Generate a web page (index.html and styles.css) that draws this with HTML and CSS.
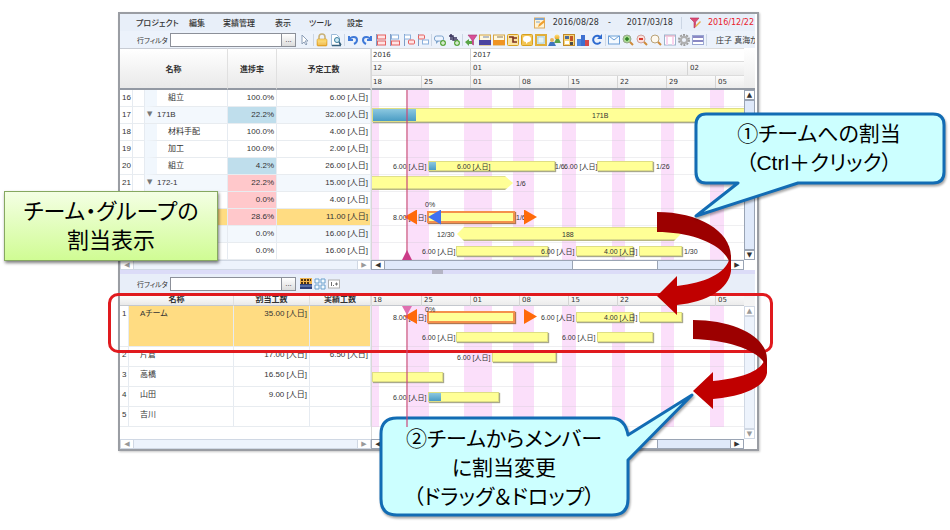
FILE: index.html
```html
<!DOCTYPE html>
<html lang="ja">
<head>
    <meta charset="UTF-8">
    <meta name="viewport" content="width=device-width, initial-scale=1.0">
    <title>チーム・グループの割当表示</title>
    <link rel="stylesheet" href="styles.css">
</head>
<body>
    <svg class="defs" aria-hidden="true">
        <defs>
            <linearGradient id="gold" x2="0" y2="1"><stop stop-color="#ffe27a"/><stop offset="1" stop-color="#e8a020"/></linearGradient>
            <symbol id="i-cursor" viewBox="0 0 14 14"><path d="M4 2v9l2-2 2 3 1-1-2-3h3z" fill="#fff" stroke="#8ea0b8"/></symbol>
            <symbol id="i-lock" viewBox="0 0 14 14"><path d="M4 7V4a3 3 0 0 1 6 0v3" fill="none" stroke="#c9b27a" stroke-width="1.6"/><rect x="2" y="6" width="10" height="7" rx="1" fill="url(#gold)" stroke="#d79a2c" stroke-width=".6"/><path d="M3 9h8M3 11h8" stroke="#fff2b8" stroke-width=".6"/></symbol>
            <symbol id="i-preview" viewBox="0 0 14 14"><path d="M2.500 1.500h5l3 3v8h-8z" fill="#fff" stroke="#9dbbd9"/><circle cx="8" cy="7" r="2.500" fill="#cfe9f5" stroke="#3b7f9d"/><path d="M10 9l2 3M3 12.500h9" stroke="#37607c" stroke-width="1.500"/></symbol>
            <symbol id="i-undo" viewBox="0 0 14 14"><path d="M3 3v4h4M3 7c2-4 8-4 8 0 0 2-1 3-3 4" fill="none" stroke="#3f79d8" stroke-width="2"/></symbol>
            <symbol id="i-redo" viewBox="0 0 14 14"><path d="M11 3v4H7M11 7c-2-4-8-4-8 0 0 2 1 3 3 4" fill="none" stroke="#3f79d8" stroke-width="2"/></symbol>
            <symbol id="i-row1" viewBox="0 0 14 14"><path d="M2.500 1v12" stroke="#7f9cc4"/><rect x="3.500" y="2" width="8" height="4" fill="#ffe4e4" stroke="#e46060"/><rect x="3.500" y="8" width="8" height="4" fill="#ffe4e4" stroke="#e46060"/></symbol>
            <symbol id="i-row2" viewBox="0 0 14 14"><path d="M2.500 1v12" stroke="#7f9cc4"/><rect x="3.500" y="2" width="7" height="4" fill="#fff" stroke="#8cb0dc"/><rect x="3.500" y="8" width="8" height="4" fill="#ffe4e4" stroke="#e46060"/></symbol>
            <symbol id="i-row3" viewBox="0 0 14 14"><path d="M2.500 1v12" stroke="#7f9cc4"/><rect x="2.500" y="2" width="6" height="4" fill="#fff" stroke="#8cb0dc"/><rect x="6.500" y="7" width="6" height="4" rx="1" fill="#ffe4e4" stroke="#e46060"/></symbol>
            <symbol id="i-row4" viewBox="0 0 14 14"><path d="M2.500 1v12" stroke="#7f9cc4"/><rect x="2.500" y="2" width="6" height="4" rx="1" fill="#ffe4e4" stroke="#e46060"/><rect x="6.500" y="7" width="6" height="4" fill="#fff" stroke="#8cb0dc"/></symbol>
            <symbol id="i-bubble" viewBox="0 0 14 14"><rect x="1.500" y="3" width="9" height="5" rx="2" fill="#eef5ff" stroke="#7da3cc"/><path d="M3 8v3l3-3" fill="#7da3cc"/><circle cx="10" cy="10" r="3" fill="#5ba83d"/><path d="M8 10h4M10 8v4" stroke="#fff"/></symbol>
            <symbol id="i-link" viewBox="0 0 14 14"><path d="M2 3h4v4h5M4 1v6M6 5h4" fill="none" stroke="#38325c" stroke-width="1.500"/><circle cx="10" cy="10" r="3" fill="#5ba83d"/><path d="M8 10h4M10 8v4" stroke="#fff"/></symbol>
            <symbol id="i-funnel" viewBox="0 0 14 14"><path d="M4 2h9L9.500 7v5L8 11V7z" fill="#d94f96" stroke="#a43672" stroke-width=".6"/><path d="M1 9l4-3v2h3v3H5v2z" fill="#5aa446"/></symbol>
            <symbol id="i-purple" viewBox="0 0 14 14"><rect x="1.500" y="2" width="11" height="10" fill="#fff8df" stroke="#d6a544"/><rect x="1" y="7" width="12" height="5" fill="#4b44a0"/><path d="M5 4h6" stroke="#6e83b0"/></symbol>
            <symbol id="i-orange" viewBox="0 0 14 14"><rect x="1.500" y="2" width="11" height="10" fill="#fff8df" stroke="#d6a544"/><rect x="1" y="7" width="12" height="5" fill="#ef9422"/><path d="M5 4h6" stroke="#8f7a5a"/></symbol>
            <symbol id="i-tree" viewBox="0 0 14 14"><rect x="1.500" y="1.500" width="11" height="11" rx="1" fill="#fbe3a1" stroke="#d6a020"/><path d="M3 4h4v5h4M7 5h4" fill="none" stroke="#7b3020" stroke-width="1.600"/></symbol>
            <symbol id="i-note" viewBox="0 0 14 14"><rect x="1.500" y="1.500" width="11" height="11" rx="1" fill="#f3c554" stroke="#d6a020"/><rect x="3" y="3" width="8" height="6" rx="3" fill="#fff"/><path d="M6 8v3l3-3" fill="#fff"/></symbol>
            <symbol id="i-frame" viewBox="0 0 14 14"><rect x="2" y="2" width="10" height="10" fill="#cfe6ef" stroke="#e0ae3a" stroke-width="2"/><rect x="4" y="4" width="6" height="6" fill="#e4f3f7" stroke="#9cc4cc" stroke-width=".6"/></symbol>
            <symbol id="i-people" viewBox="0 0 14 14"><circle cx="9" cy="4" r="2.500" fill="url(#gold)"/><path d="M6 10l2-4h3l2 4z" fill="#5aa04a"/><circle cx="4" cy="7" r="2" fill="#e9b25c"/><path d="M0 13l2-4h4l2 4z" fill="#3f74c0"/></symbol>
            <symbol id="i-board" viewBox="0 0 14 14"><rect x="1.500" y="1.500" width="11" height="11" fill="#f7d57a" stroke="#c08a2a"/><rect x="3" y="3" width="4" height="3" fill="#4a6a9c"/><rect x="8" y="3" width="3" height="5" fill="#c35428"/><rect x="3" y="8" width="4" height="3" fill="#fff"/><rect x="8" y="9" width="3" height="3" fill="#4a4a4a"/></symbol>
            <symbol id="i-chart" viewBox="0 0 14 14"><rect x="1" y="6" width="4" height="7" fill="#4f86dc"/><rect x="5" y="2" width="4" height="11" fill="#3d6fd0"/><rect x="9" y="7" width="4" height="6" fill="#d64a4a"/></symbol>
            <symbol id="i-refresh" viewBox="0 0 14 14"><path d="M10 4a4 4 0 1 0 .5 5" fill="none" stroke="#2f6bd0" stroke-width="2"/><path d="M7 6h5V1z" fill="#2f6bd0"/></symbol>
            <symbol id="i-mail" viewBox="0 0 14 14"><rect x="1.500" y="3" width="11" height="8" fill="#f5faff" stroke="#6d9fd6"/><path d="M2 3l5 4 5-4" fill="none" stroke="#6d9fd6"/></symbol>
            <symbol id="i-zoomin" viewBox="0 0 14 14"><circle cx="6" cy="6" r="4" fill="#a8d890" stroke="#9aa890"/><path d="M6 4v4M4 6h4" stroke="#2c7f24" stroke-width="1.500"/><path d="M9 9l3 3" stroke="#cf8b3a" stroke-width="2"/></symbol>
            <symbol id="i-zoomout" viewBox="0 0 14 14"><circle cx="6" cy="6" r="4" fill="#fbe0dc" stroke="#d0a09a"/><path d="M4 6h4" stroke="#d83a2e" stroke-width="2"/><path d="M9 9l3 3" stroke="#cf8b3a" stroke-width="2"/></symbol>
            <symbol id="i-zoom" viewBox="0 0 14 14"><circle cx="6" cy="6" r="4" fill="#fdf8ee" stroke="#b9a278"/><path d="M9 9l3 3" stroke="#cf8b3a" stroke-width="2"/></symbol>
            <symbol id="i-cal" viewBox="0 0 14 14"><rect x="1.500" y="2" width="11" height="10" fill="#fff" stroke="#9db4cc"/><path d="M4 4v8M10 4v8" stroke="#fad4ee" stroke-width="2"/><path d="M2 3h10" stroke="#e79ab8"/></symbol>
            <symbol id="i-gear" viewBox="0 0 14 14"><circle cx="7" cy="7" r="5" fill="none" stroke="#9c9c9c" stroke-width="2" stroke-dasharray="2 1.140"/><circle cx="7" cy="7" r="3.200" fill="none" stroke="#b0b0b0" stroke-width="2.200"/></symbol>
            <symbol id="i-lines" viewBox="0 0 14 14"><rect x="1.500" y="2.500" width="11" height="9" fill="#fff" stroke="#9aa6d2"/><path d="M2 4h10M2 8h10" stroke="#8a88c4" stroke-width="2"/></symbol>
            <symbol id="i-edit" viewBox="0 0 14 14"><rect x="1.500" y="2" width="10" height="10" fill="#fff3d4" stroke="#dcaa5c"/><path d="M2 3h9" stroke="#7fa6d2" stroke-width="2"/><path d="M5 11l1-3 5-4 1 2-5 4z" fill="#f0a030"/><path d="M3 6h4" stroke="#7fa6d2"/></symbol>
            <symbol id="i-filter" viewBox="0 0 14 14"><path d="M2 2h9L7.500 6v5L6 12V6z" fill="#dc4c74" stroke="#b6315c" stroke-width=".6"/><path d="M7 10l5-5 1 1-5 5z" fill="#eab04a"/></symbol>
            <symbol id="i-crowd" viewBox="0 0 14 14"><rect x="1" y="1" width="12" height="7" fill="#efb44e"/><path d="M2 3h2M5 3h2M8 3h2M11 3h1M2 6h2M5 6h2M8 6h2" stroke="#4d3210" stroke-width="2"/><rect x="1" y="7" width="12" height="5" fill="#2c3f78"/><path d="M1 9h12" stroke="#7f9cd0"/></symbol>
            <symbol id="i-split" viewBox="0 0 14 14"><path d="M2 2h4v4H2zM8 2h4v4H8zM2 8h4v4H2zM8 8h4v4H8z" fill="#f4fbff" stroke="#6aa0cc"/></symbol>
            <symbol id="i-num" viewBox="0 0 14 14"><rect x="1.500" y="3" width="11" height="8" fill="#fff" stroke="#b0b0b0"/><path d="M4.500 5v4M6 8.500h1M8 7h3M9.500 5.500v3" stroke="#707070"/></symbol>
        </defs>
    </svg>

    <main class="page">
        <div class="window">
            <div class="menubar">
                <nav class="menu">
                    <a href="#">プロジェクト</a>
                    <a href="#">編集</a>
                    <a href="#">実績管理</a>
                    <a href="#">表示</a>
                    <a href="#">ツール</a>
                    <a href="#">設定</a>
                </nav>
                <div class="period">
                    <svg class="icon"><use href="#i-edit"/></svg>
                    <span class="date">2016/08/28</span>
                    <span class="dash">-</span>
                    <span class="date">2017/03/18</span>
                    <span class="sep"></span>
                    <svg class="icon"><use href="#i-filter"/></svg>
                    <span class="date today">2016/12/22</span>
                </div>
            </div>

            <div class="toolbar">
                <label for="filter-top">行フィルタ</label>
                <input type="text" id="filter-top">
                <button type="button" class="more">...</button>
                <div class="tools" id="tools-top"></div>
                <span class="user">庄子 真海か</span>
            </div>

            <section class="pane">
                <table class="grid tasks">
                    <colgroup><col class="c-num"><col class="c-ind"><col><col class="c-rate"><col class="c-hours"></colgroup>
                    <thead>
                        <tr><th colspan="3">名称</th><th>進捗率</th><th>予定工数</th></tr>
                    </thead>
                    <tbody>
                        <tr><td>16</td><td></td><td class="child">組立</td><td>100.0%</td><td>6.00 [人日]</td></tr>
                        <tr class="parent"><td>17</td><td></td><td><span class="fold">▼</span>171B</td><td class="blue">22.2%</td><td>32.00 [人日]</td></tr>
                        <tr><td>18</td><td></td><td class="child">材料手配</td><td>100.0%</td><td>4.00 [人日]</td></tr>
                        <tr><td>19</td><td></td><td class="child">加工</td><td>100.0%</td><td>2.00 [人日]</td></tr>
                        <tr><td>20</td><td></td><td class="child">組立</td><td class="blue">4.2%</td><td>26.00 [人日]</td></tr>
                        <tr class="parent"><td>21</td><td></td><td><span class="fold">▼</span>172-1</td><td class="red">22.2%</td><td>15.00 [人日]</td></tr>
                        <tr><td></td><td></td><td class="child"></td><td class="red">0.0%</td><td>4.00 [人日]</td></tr>
                        <tr class="selected"><td></td><td></td><td></td><td class="red">28.6%</td><td>11.00 [人日]</td></tr>
                        <tr class="parent"><td></td><td></td><td></td><td>0.0%</td><td>16.00 [人日]</td></tr>
                        <tr><td></td><td></td><td class="child"></td><td>0.0%</td><td>16.00 [人日]</td></tr>
                    </tbody>
                </table>
                <div class="gantt">
                    <div class="scale years"><span>2016</span><span>2017</span></div>
                    <div class="scale months"><span>12</span><span>01</span><span>02</span></div>
                    <div class="scale weeks"><span>18</span><span>25</span><span>01</span><span>08</span><span>15</span><span>22</span><span>29</span><span>05</span></div>
                    <div class="chart" id="chart-top"></div>
                </div>
                <div class="vscroll"><button type="button" aria-label="上へ">▲</button><i></i><button type="button" aria-label="下へ">▼</button></div>
                <div class="hscroll off"><button type="button" aria-label="左へ">◀</button><i></i><button type="button" aria-label="右へ">▶</button></div>
                <div class="hscroll"><button type="button" aria-label="左へ">◀</button><i></i><b></b><i class="rest"></i><button type="button" aria-label="右へ">▶</button></div>
            </section>

            <div class="splitter"><span></span></div>

            <div class="toolbar lower">
                <label for="filter-bottom">行フィルタ</label>
                <input type="text" id="filter-bottom">
                <button type="button" class="more">...</button>
                <div class="tools" id="tools-bottom"></div>
            </div>

            <section class="pane members-pane">
                <table class="grid members">
                    <colgroup><col class="c-no"><col><col class="c-plan"><col class="c-actual"></colgroup>
                    <thead>
                        <tr><th colspan="2">名称</th><th>割当工数</th><th>実績工数</th></tr>
                    </thead>
                    <tbody>
                        <tr class="selected team"><td>1</td><td>Aチーム</td><td>35.00 [人日]</td><td></td></tr>
                        <tr><td>2</td><td>片倉</td><td>17.00 [人日]</td><td>6.50 [人日]</td></tr>
                        <tr><td>3</td><td>高橋</td><td>16.50 [人日]</td><td></td></tr>
                        <tr><td>4</td><td>山田</td><td>9.00 [人日]</td><td></td></tr>
                        <tr><td>5</td><td>吉川</td><td></td><td></td></tr>
                    </tbody>
                </table>
                <div class="gantt">
                    <div class="scale weeks"><span>18</span><span>25</span><span>01</span><span>08</span><span>15</span><span>22</span><span></span><span>05</span></div>
                    <div class="chart" id="chart-bottom"></div>
                </div>
                <div class="vscroll off"><button type="button" aria-label="上へ">▲</button><i></i><button type="button" aria-label="下へ">▼</button></div>
                <div class="hscroll off"><button type="button" aria-label="左へ">◀</button><i></i><button type="button" aria-label="右へ">▶</button></div>
                <div class="hscroll"><button type="button" aria-label="左へ">◀</button><i></i><b></b><i class="rest"></i><button type="button" aria-label="右へ">▶</button></div>
            </section>
        </div>

        <!-- annotations over the window -->
        <div class="frame"></div>
        <div class="title-note">チーム・グループの<br>割当表示</div>

        <svg class="arrow arrow-one" viewBox="0 0 76 104">
            <path fill="#c00000" d="M74 44V60C72 78 50 91 20 94V104L0 85 20 65V75C48 72 68 62 72 49z"/>
            <path fill="#9c0000" d="M0 1C42 1 74 20 74 46V56C70 34 36 21 0 21z"/>
        </svg>
        <svg class="arrow arrow-two" viewBox="0 0 76 91">
            <path fill="#c00000" d="M74 40V54C72 68 50 77 20 80V90L0 72 20 53V62C48 59 66 53 71 42z"/>
            <path fill="#9c0000" d="M0 1C42 1 74 18 74 40V50C70 32 36 21 0 20z"/>
        </svg>

        <div class="callout callout-one">
            <svg viewBox="0 0 254 108"><path d="M12 2H239Q250 2 250 13V60Q250 71 239 71H104L2 104 44 71H12Q2 71 2 60V13Q2 2 12 2z"/></svg>
            <p>①チームへの割当<br>（Ctrl＋クリック）</p>
        </div>
        <div class="callout callout-two">
            <svg viewBox="0 0 320 128"><path d="M19 26H233Q247 26 250 43L314 3 250 68V107Q250 123 234 123H19Q3 123 3 107V42Q3 26 19 26z"/></svg>
            <p>②チームからメンバー<br>に割当変更<br>（ドラッグ＆ドロップ）</p>
        </div>
    </main>

    <script>
        const topTools = [
            ['cursor'], ['lock', 'preview'], ['undo', 'redo', 'row1', 'row2', 'row3', 'row4'],
            ['bubble', 'link'],
            ['funnel', 'purple', 'orange', 'tree', 'note', 'frame', 'people', 'board', 'chart', 'refresh'],
            ['mail', 'zoomin', 'zoomout', 'zoom', 'cal', 'gear', 'lines'], []
        ];
        const bottomTools = [['crowd', 'split', 'num']];

        // x and w are pixels on the time axis, 7 per day
        const topRows = [
            [],
            [{ type: 'bar big', x: 0, w: 460, done: 43 }, { type: 'text', x: 220, label: '171B' }],
            [],
            [],
            [{ type: 'text', x: 21, label: '6.00 [人日]' }, { type: 'bar', x: 56, w: 127, done: 7 },
             { type: 'text', x: 85, label: '6.00 [人日]' }, { type: 'text', x: 183, label: '1/6' },
             { type: 'text', x: 192, label: '6.00 [人日]' }, { type: 'bar', x: 225, w: 56 }, { type: 'text', x: 284, label: '1/26' }],
            [{ type: 'bar big to-right', x: 0, w: 141 }, { type: 'text', x: 144, label: '1/6' }],
            [{ type: 'text low', x: 53, label: '0%' }],
            [{ type: 'text', x: 21, label: '8.00 [人日]' }, { type: 'bar active', x: 55, w: 88 }, { type: 'text', x: 144, label: '1/6' },
             { type: 'tri left', x: 32 }, { type: 'tri left move', x: 56 }, { type: 'tri', x: 152 }],
            [{ type: 'text', x: 65, label: '12/30' }, { type: 'bar big both', x: 85, w: 224 }, { type: 'text', x: 190, label: '188' }],
            [{ type: 'text', x: 50, label: '6.00 [人日]' }, { type: 'bar', x: 84, w: 92 }, { type: 'text', x: 169, label: '6.00 [人日]' },
             { type: 'bar', x: 204, w: 57 }, { type: 'text', x: 232, label: '4.00 [人日]' }, { type: 'bar', x: 267, w: 43 }, { type: 'text', x: 312, label: '1/30' }]
        ];
        const bottomRows = [
            [{ type: 'text', x: 21, label: '8.00 [人日]' }, { type: 'bar active', x: 55, w: 88 }, { type: 'text high', x: 53, label: '0%' },
             { type: 'tri left', x: 32 }, { type: 'tri', x: 152 },
             { type: 'text', x: 169, label: '6.00 [人日]' }, { type: 'bar', x: 204, w: 57 }, { type: 'text', x: 232, label: '4.00 [人日]' }, { type: 'bar', x: 267, w: 43 }],
            [{ type: 'text', x: 50, label: '6.00 [人日]' }, { type: 'bar', x: 84, w: 92 }, { type: 'text', x: 190, label: '6.00 [人日]' }, { type: 'bar', x: 225, w: 56 }],
            [{ type: 'text', x: 85, label: '6.00 [人日]' }, { type: 'bar', x: 120, w: 64 }],
            [{ type: 'bar', x: 0, w: 71 }],
            [{ type: 'text', x: 21, label: '6.00 [人日]' }, { type: 'bar', x: 56, w: 71, done: 12 }],
            [],
            []
        ];

        function drawTools(id, groups) {
            document.getElementById(id).innerHTML = groups.map(group =>
                group.map(name => `<button type="button" aria-label="${name}"><svg class="icon"><use href="#i-${name}"/></svg></button>`).join('')
            ).join('<span class="sep"></span>');
        }

        function drawItem(item) {
            const width = item.w ? `width:${item.w}px` : '';
            const done = item.done ? `<i style="width:${item.done}px"></i>` : '';
            return `<span class="${item.type}" style="left:${item.x}px;${width}">${done}${item.label || ''}</span>`;
        }

        function drawChart(id, rows) {
            document.getElementById(id).innerHTML =
                '<div class="now"></div>' + rows.map(row => `<div class="row">${row.map(drawItem).join('')}</div>`).join('');
        }

        drawTools('tools-top', topTools);
        drawTools('tools-bottom', bottomTools);
        drawChart('chart-top', topRows);
        drawChart('chart-bottom', bottomRows);
    </script>
</body>
</html>
```

FILE: styles.css
```css
* {
    box-sizing: border-box;
}
body {
    margin: 0;
    background: #fff;
    color: #333;
    font-family: "Liberation Sans", "Noto Sans CJK JP", sans-serif;
    font-size: 8px;
    font-feature-settings: "palt";
}
button, input {
    font: inherit;
    color: inherit;
    padding: 0;
    border: 0;
    background: none;
}
.defs {
    position: absolute;
    width: 0;
    height: 0;
}
.icon {
    display: block;
    width: 14px;
    height: 14px;
}
.page {
    position: relative;
    min-height: 530px;
    padding: 12px 191px 0 118px;
}
.window {
    border: 2px solid #9a9da3;
    padding-right: 2px;
    background: #fff;
    box-shadow: 1px 1px 2px #c8c8c8;
}

/* menu and toolbars */
.menubar {
    display: flex;
    justify-content: space-between;
    height: 17px;
    padding: 0 1px 0 16px;
    align-items: center;
    background: #e8eff9;
    white-space: nowrap;
}
.menu {
    display: grid;
    grid-template-columns: 53px 34px 52px 34px 38px auto;
    font-weight: 500;
}
.menu a {
    color: #333;
    text-decoration: none;
}
.period {
    display: flex;
    align-items: center;
    gap: 6px;
    font-family: "DejaVu Sans", sans-serif;
}
.dash {
    padding: 0 10px 0 3px;
}
.today {
    color: #e8202c;
}
.sep {
    flex: none;
    width: 1px;
    height: 12px;
    margin: 0 1px;
    background: #ccd6e4;
}
.period .sep {
    margin: 0 0 0 2px;
}
.toolbar {
    display: flex;
    align-items: center;
    height: 17px;
    padding-left: 17px;
    background: #ecf2fb;
    overflow: hidden;
    white-space: nowrap;
}
.toolbar.lower {
    height: 20px;
    background: #e8eef9;
}
.toolbar label {
    flex: none;
    width: 33px;
    font-size: 7px;
}
.toolbar input {
    flex: none;
    width: 112px;
    height: 14px;
    border: 1px solid #8c9099;
    background: #fff;
}
.more {
    flex: none;
    width: 14px;
    height: 14px;
    margin-right: 2px;
    border: 1px solid #8c9099;
    border-left: 0;
    background: linear-gradient(#fff, #dcdcdc);
    line-height: 12px;
}
.tools {
    display: flex;
    flex: none;
    align-items: center;
}
.lower .tools {
    padding-left: 1px;
}
.user {
    padding-left: 8px;
}

/* panes */
.pane {
    display: grid;
    grid-template-columns: 251px 1fr 11px;
    grid-template-rows: auto 10px;
}
.grid {
    width: 100%;
    table-layout: fixed;
    border-collapse: separate;
    border-spacing: 0;
    align-self: start;
}
.c-num { width: 13px; }
.c-ind { width: 12px; }
.c-rate { width: 49px; }
.c-hours { width: 94px; }
.c-no { width: 9px; }
.c-plan { width: 76px; }
.c-actual { width: 61px; }
.grid th {
    height: 42px;
    padding: 0;
    border-right: 1px solid #e0e0e0;
    border-top: 1px solid #c8ccd4;
    border-bottom: 2px solid #9399a3;
    background: linear-gradient(#fff, #e9e9e9);
    font-weight: bold;
}
.grid td {
    height: 17px;
    padding: 2px 2px 3px 2px;
    border-right: 1px solid #e6ebf1;
    border-bottom: 1px solid #e8ecf0;
    line-height: 11px;
    text-align: right;
    white-space: nowrap;
}
.grid td:first-child {
    text-align: left;
}
.tasks td:nth-child(3) {
    text-align: left;
}
.tasks td.child {
    padding-left: 11px;
    border-left: 12px solid #f1f7fd;
}
.tasks .parent td:nth-child(n+3) {
    background: #f3f8fd;
}
.fold {
    float: left;
    width: 10px;
    color: #777;
    font-family: "DejaVu Sans", sans-serif;
    font-size: 7px;
}
.grid .selected td:nth-child(n+2) {
    background: #ffdc82;
}
.tasks .parent td.blue, .tasks td.blue {
    background: #bfdeec;
}
.tasks .parent td.red, .tasks .selected td.red, .tasks td.red {
    background: #ffc8cb;
}
.members th {
    height: 12px;
    border-bottom: 1px solid #c4c8ce;
    line-height: 10px;
}
.members td {
    height: 20px;
    padding-top: 1px;
    padding-bottom: 5px;
    line-height: 13px;
}
.members td:nth-child(2) {
    padding-left: 11px;
    text-align: left;
}
.members .team td {
    height: 41px;
    vertical-align: top;
}

/* gantt */
.gantt {
    display: flex;
    flex-direction: column;
    min-width: 0;
    overflow: hidden;
    border-left: 1px solid #d8d8d8;
}
.scale {
    display: grid;
    height: 14px;
    border-top: 1px solid #dcdcdc;
    background: linear-gradient(#fbfbfb, #ececec);
    font-family: "DejaVu Sans", sans-serif;
    font-size: 7px;
    line-height: 12px;
}
.scale span {
    padding-left: 1px;
    border-right: 1px solid #d4d4d4;
}
.scale span + span {
    padding-left: 2px;
}
.scale span:last-child {
    border-right: 0;
}
.years {
    grid-template-columns: 99px 1fr;
    height: 13px;
    background: #fff;
}
.months {
    grid-template-columns: 99px 217px 1fr;
}
.weeks {
    grid-template-columns: 50px repeat(6, 49px) 1fr;
    height: 15px;
    border-bottom: 2px solid #9399a3;
}
.members-pane .weeks {
    height: 12px;
    border-bottom: 1px solid #c4c8ce;
    line-height: 11px;
}
.chart {
    position: relative;
    flex: 1;
    overflow: hidden;
    background: linear-gradient(90deg,
        #fbdffa 7px, #fff 7px 36px, #fbdffa 36px 57px, #fff 57px 92px,
        #fbdffa 92px 120px, #fff 120px 141px, #fbdffa 141px 162px, #fff 162px 190px,
        #fbdffa 190px 204px, #fff 204px 240px, #fbdffa 240px 253px, #fff 253px 289px,
        #fbdffa 289px 302px, #fff 302px 338px, #fbdffa 338px 352px, #fff 352px);
}
.row {
    position: relative;
    display: flex;
    align-items: center;
    height: 17px;
    border-bottom: 1px solid rgba(190, 190, 200, 0.25);
    font-size: 7px;
    white-space: nowrap;
}
#chart-bottom .row {
    height: 20px;
}
#chart-bottom .row:nth-child(2) {
    height: 21px;
    border-bottom: 0;
}
#chart-bottom .row:last-child {
    height: 12px;
    border: 0;
    background: #fff;
}
.row > span {
    position: absolute;
}
.bar {
    height: 10px;
    border: 1px solid #dede84;
    background: #ffff96;
    box-shadow: 1px 1px 1px #a8a88c;
}
.bar.big {
    height: 14px;
}
.bar i {
    display: block;
    height: 100%;
    background: linear-gradient(#8cc8e0, #4a9cc4);
}
.bar.to-right, .bar.both {
    border: 0;
    box-shadow: none;
    background: linear-gradient(#e0e08a 1px, #ffff96 1px 12px, #b8b884 13px);
}
.to-right {
    clip-path: polygon(0 0, 133px 0, 100% 50%, 133px 100%, 0 100%);
}
.both {
    clip-path: polygon(7px 0, 217px 0, 100% 50%, 217px 100%, 7px 100%, 0 50%);
}
.bar.active {
    height: 12px;
    border: 2px solid #f4904c;
    box-shadow: 1px 1px 1px #b07850;
}
.low {
    bottom: 0;
}
.high {
    top: 0;
}
.tri {
    width: 13px;
    height: 15px;
    background: #ff6a0a;
    clip-path: polygon(0 0, 100% 50%, 0 100%);
}
.tri.left {
    clip-path: polygon(100% 0, 0 50%, 100% 100%);
}
.tri.move {
    background: #4070f0;
}
.now {
    position: absolute;
    z-index: 1;
    top: 0;
    bottom: 0;
    left: 34px;
    width: 2px;
    background: rgba(200, 70, 120, 0.6);
}
#chart-bottom .now {
    bottom: 12px;
}
.now::after {
    content: "";
    position: absolute;
    left: -4px;
    bottom: 0;
    width: 10px;
    height: 10px;
    background: #cc3c88;
    clip-path: polygon(50% 0, 100% 100%, 0 100%);
}
#chart-bottom .now::after {
    top: 0;
    height: 9px;
    background: #e070b0;
    clip-path: polygon(0 0, 100% 0, 50% 100%);
}

/* scrollbars */
.vscroll, .hscroll {
    display: flex;
    font-family: "DejaVu Sans", sans-serif;
    font-size: 7px;
    line-height: 8px;
}
.vscroll {
    flex-direction: column;
    padding-top: 42px;
    background: linear-gradient(#fff, #ececec 40px, #9399a3 40px 42px, #fff 42px);
}
.members-pane .vscroll {
    padding-top: 12px;
    background: linear-gradient(#f4f4f4 12px, #fff 12px);
}
.vscroll button {
    height: 10px;
    border: 1px solid #9aa4b4;
}
.vscroll i {
    flex: 1;
    border: 1px solid #9aa4b4;
    background: #dfe9fa;
}
.hscroll {
    border: 1px solid #9aa4b4;
    background: #fff;
}
.hscroll button {
    width: 12px;
}
.hscroll i {
    flex: 190;
    border: solid #9aa4b4;
    border-width: 0 1px;
    background: #dfe9fa;
}
.hscroll .rest {
    flex: 73;
}
.hscroll b {
    flex: 85;
}
.off {
    color: #999;
}
.off button, .off i, .hscroll.off {
    border-color: #d0d8e4;
}
.off i {
    background: #edf3fc;
}
.splitter {
    display: flex;
    justify-content: center;
    height: 4px;
    background: #dcdcf8;
}
.splitter span {
    width: 11px;
    background: #b4b4c4;
}

/* annotations */
.frame {
    position: absolute;
    left: 108px;
    top: 293px;
    width: 665px;
    height: 60px;
    border: 3px solid #e01a1e;
    border-radius: 10px;
}
.title-note {
    position: absolute;
    left: 4px;
    top: 191px;
    width: 214px;
    padding: 5px 0;
    border: 1px solid #86a860;
    background: linear-gradient(#f4ffe4, #d0fc94);
    box-shadow: 1px 2px 3px rgba(0, 0, 0, 0.5);
    color: #000;
    font-size: 22px;
    line-height: 29px;
    text-align: center;
}
.arrow {
    position: absolute;
    width: 76px;
}
.arrow-one {
    left: 657px;
    top: 211px;
}
.arrow-two {
    left: 693px;
    top: 319px;
}
.callout {
    position: absolute;
    color: #000;
    font-size: 21px;
    line-height: 29px;
    text-align: center;
}
.callout svg {
    display: block;
    width: 100%;
    overflow: visible;
    filter: drop-shadow(1px 2px 1px rgba(0, 0, 0, 0.35));
}
.callout path {
    fill: #ccffff;
    stroke: #126cb4;
    stroke-width: 3px;
    stroke-linejoin: round;
}
.callout p {
    position: absolute;
    margin: 0;
    white-space: nowrap;
}
.callout-one {
    left: 694px;
    top: 112px;
    width: 254px;
}
.callout-one p {
    top: 7px;
    left: 0;
    width: 250px;
}
.callout-two {
    left: 378px;
    top: 392px;
    width: 320px;
}
.callout-two p {
    top: 32px;
    left: 0;
    width: 252px;
}
```
